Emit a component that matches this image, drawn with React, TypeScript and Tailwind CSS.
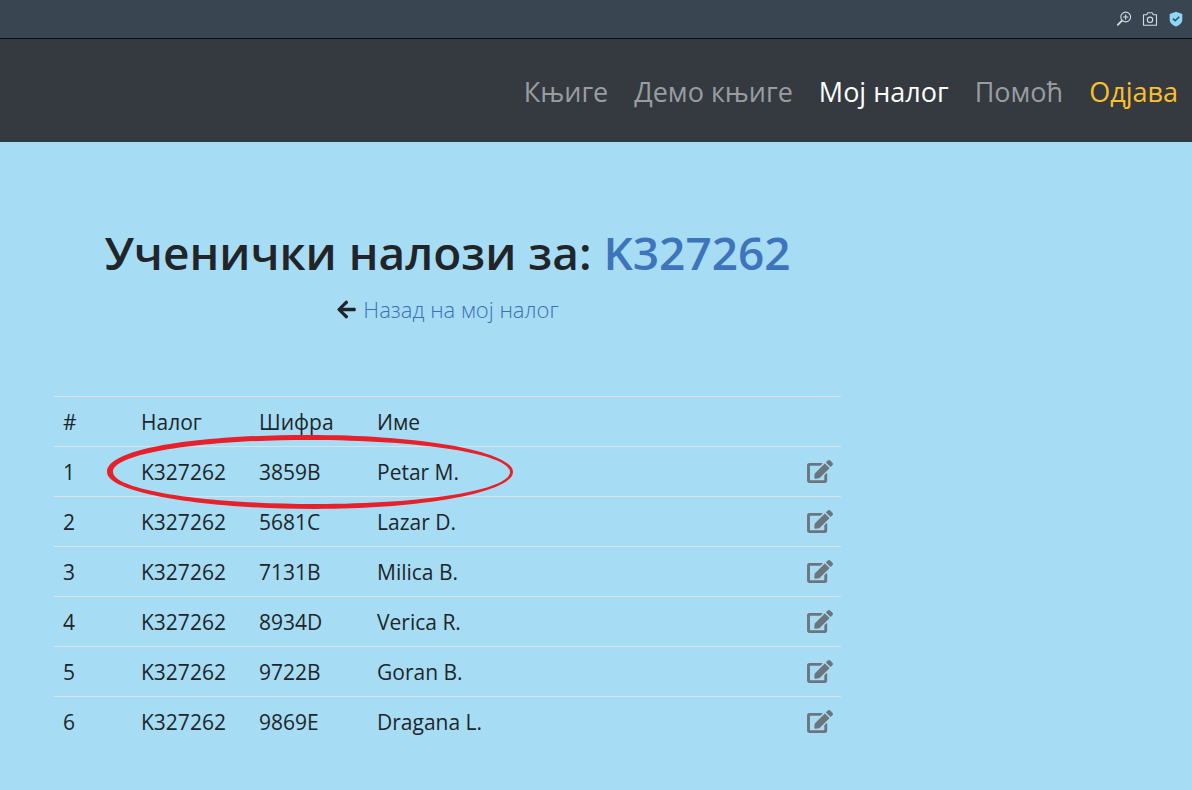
import { FaArrowLeft, FaEdit } from 'react-icons/fa';

type Account = {
  account: string;
  code: string;
  name: string;
};

const NAV_LINKS = [
  { label: 'Књиге', className: 'text-[#9a9da0]' },
  { label: 'Демо књиге', className: 'text-[#9a9da0]' },
  { label: 'Мој налог', className: 'text-white' },
  { label: 'Помоћ', className: 'text-[#9a9da0]' },
  { label: 'Одјава', className: 'text-[#fbc02d]' },
];

const ACCOUNTS: Account[] = [
  { account: 'K327262', code: '3859B', name: 'Petar M.' },
  { account: 'K327262', code: '5681C', name: 'Lazar D.' },
  { account: 'K327262', code: '7131B', name: 'Milica B.' },
  { account: 'K327262', code: '8934D', name: 'Verica R.' },
  { account: 'K327262', code: '9722B', name: 'Goran B.' },
  { account: 'K327262', code: '9869E', name: 'Dragana L.' },
];

function BrowserBar() {
  return (
    <div className="flex h-[39px] items-center justify-end gap-[10px] border-b border-[#0c0f12] bg-[#3a4552] px-2 text-[#d5dbe1]">
      <button type="button" aria-label="Zoom">
        <svg viewBox="0 0 16 16" className="size-4" fill="none" stroke="currentColor" strokeWidth="1.1" strokeLinecap="round">
          <circle cx="9.7" cy="6" r="4.9" />
          <path d="M9.7 3.8v4.4M7.5 6h4.4" />
          <path d="M6 9.6 1.8 13.8" strokeWidth="1.8" />
        </svg>
      </button>
      <button type="button" aria-label="Snapshot">
        <svg viewBox="0 0 16 16" className="size-4" fill="none" stroke="currentColor" strokeWidth="1.1" strokeLinejoin="round">
          <path d="M1.5 3.8h3.2l1.2-2h4.2l1.2 2h3.2v10.4h-13z" />
          <circle cx="8" cy="8.8" r="2.7" />
        </svg>
      </button>
      <button type="button" aria-label="Protection">
        <svg viewBox="0 0 16 16" className="size-4">
          <path d="M8 .8 14.3 3v5.2c0 3.4-2.4 5.9-6.3 7.2-3.9-1.3-6.3-3.8-6.3-7.2V3z" fill="#8fd6f7" />
          <path d="m5 7.6 2.2 2.2 4-4.1" fill="none" stroke="#2f4a60" strokeWidth="1.5" />
        </svg>
      </button>
    </div>
  );
}

function Navbar() {
  return (
    <nav className="flex justify-end bg-[#343a40] px-[14px] pt-[33px] pb-[31px]">
      <ul className="flex gap-[26px] text-[27px] leading-[39px]">
        {NAV_LINKS.map((link) => (
          <li key={link.label}>
            <a href="#" className={link.className}>
              {link.label}
            </a>
          </li>
        ))}
      </ul>
    </nav>
  );
}

// Hand-drawn looking ring, thicker on the top left
function Ring() {
  return (
    <svg
      viewBox="0 0 406 74"
      className="pointer-events-none absolute top-[39px] left-[53px] h-[74px] w-[406px]"
      aria-hidden="true"
    >
      <path
        fill="#e8202a"
        fillRule="evenodd"
        d="M0 37C0 14 86 0 202 0S406 17 406 37 318 74 208 74 0 58 0 37ZM6 37C6 55 98 69 208 69S403 55 403 37 314 5 202 5 6 19 6 37Z"
      />
    </svg>
  );
}

function AccountsTable() {
  return (
    <div className="relative mt-[70px]">
      <table className="w-full table-fixed text-left text-[21px] leading-[33px] text-[#212529]">
        <colgroup>
          <col className="w-[78px]" />
          <col className="w-[118px]" />
          <col className="w-[118px]" />
          <col />
          <col className="w-[52px]" />
        </colgroup>
        <thead>
          <tr className="border-t border-[#dee2e6]">
            <th className="px-[9px] pt-[9px] pb-[7px] font-normal">#</th>
            <th className="px-[9px] pt-[9px] pb-[7px] font-normal">Налог</th>
            <th className="px-[9px] pt-[9px] pb-[7px] font-normal">Шифра</th>
            <th className="px-[9px] pt-[9px] pb-[7px] font-normal">Име</th>
            <td />
          </tr>
        </thead>
        <tbody>
          {ACCOUNTS.map((row, i) => (
            <tr key={row.code} className="border-t border-[#dee2e6]">
              <td className="px-[9px] pt-[9px] pb-[7px]">{i + 1}</td>
              <td className="px-[9px] pt-[9px] pb-[7px]">{row.account}</td>
              <td className="px-[9px] pt-[9px] pb-[7px]">{row.code}</td>
              <td className="px-[9px] pt-[9px] pb-[7px]">{row.name}</td>
              <td className="px-2 py-2">
                <button type="button" aria-label={`Edit ${row.name}`} className="ml-auto block text-[#6c757d]">
                  <FaEdit className="h-[23px] w-[26px]" />
                </button>
              </td>
            </tr>
          ))}
        </tbody>
      </table>
      <Ring />
    </div>
  );
}

export default function App() {
  return (
    <div className="flex min-h-screen flex-col bg-[#a6ddf4] font-['Open_Sans','Noto_Sans',sans-serif]">
      <BrowserBar />
      <Navbar />
      <main className="grow px-[54px] pt-[78px] pb-10">
        <div className="max-w-[787px]">
          <h1 className="text-center text-[46px] leading-[64px] font-semibold text-[#212529]">
            Ученички налози за: <span className="text-[#3e74bb]">K327262</span>
          </h1>
          <p className="mt-[9px] flex items-center justify-center gap-[6px] text-[22px] leading-[33px] font-light">
            <FaArrowLeft className="size-[21px] text-[#212529]" />
            <a href="#" className="text-[#3e6fb5]">
              Назад на мој налог
            </a>
          </p>
          <AccountsTable />
        </div>
      </main>
    </div>
  );
}
